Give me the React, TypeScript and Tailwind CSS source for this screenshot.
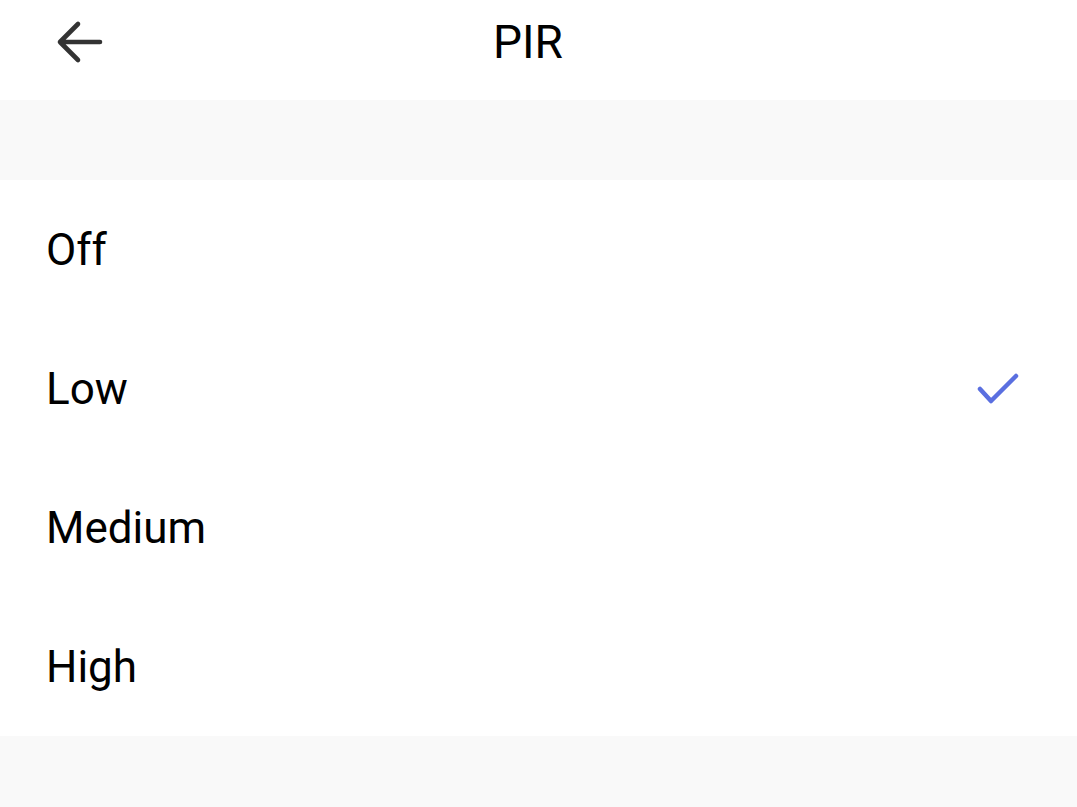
import React, { useState } from 'react';

const options = ['Off', 'Low', 'Medium', 'High'];

const App: React.FC = () => {
  const [selected, setSelected] = useState('Low');

  return (
    <div className="min-h-[807px] w-full bg-[#f9f9f9] font-['Roboto',sans-serif] text-black">
      <header className="h-[100px] flex items-center pb-[16px] bg-white">
        <button className="w-[130px] h-full flex items-center pl-[55px]">
          <svg width="48" height="44" viewBox="0 0 48 44" fill="none">
            <path
              d="M45 22H5M23 4L5 22l18 18"
              stroke="#333"
              strokeWidth="4.6"
              strokeLinecap="round"
              strokeLinejoin="round"
            />
          </svg>
        </button>
        <h1 className="flex-1 text-center text-[46px] font-normal pr-[151px] leading-none">PIR</h1>
      </header>

      <div className="h-[80px]" />

      <ul className="bg-white">
        {options.map((opt) => (
          <li
            key={opt}
            onClick={() => setSelected(opt)}
            className="h-[139px] flex items-center justify-between pl-[46px] pr-[58px] cursor-pointer"
          >
            <span className="text-[44px] leading-none">{opt}</span>
            {selected === opt && (
              <svg width="42" height="32" viewBox="0 0 42 32" fill="none">
                <path
                  d="M3 16l11 12L39 3"
                  stroke="#5a6fe0"
                  strokeWidth="4.5"
                  strokeLinecap="round"
                  strokeLinejoin="round"
                />
              </svg>
            )}
          </li>
        ))}
      </ul>
    </div>
  );
};

export default App;
